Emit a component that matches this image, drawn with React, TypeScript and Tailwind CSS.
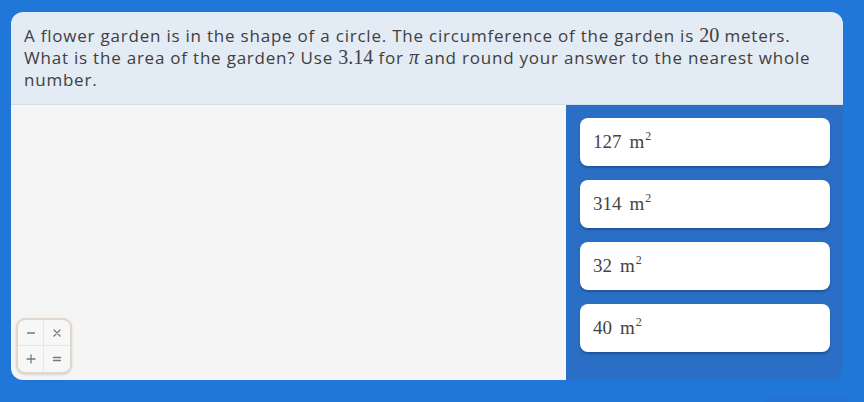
import React from "react";

const M = ({ children, italic }: { children: React.ReactNode; italic?: boolean }) => (
  <span
    className={`text-[1.18em] leading-none tracking-normal ${italic ? "italic" : ""}`}
    style={{ fontFamily: '"Liberation Serif", "DejaVu Serif", serif' }}
  >
    {children}
  </span>
);

const answers = ["127", "314", "32", "40"];

const Sym = ({ d }: { d: string }) => (
  <svg width="10" height="10" viewBox="0 0 10 10" fill="none" stroke="#777" strokeWidth="1.3" strokeLinecap="round">
    <path d={d} />
  </svg>
);

export default function App() {
  return (
    <div className="w-[864px] h-[402px] bg-[#2177d8] overflow-hidden pt-[12px] px-[11px]">
      <div className="w-[832px] h-[368px] rounded-[12px] overflow-hidden flex flex-col">
        <div
          className="bg-[#e3ebf4] h-[93px] pl-[13px] pr-[13px] pt-[13px] text-[17px] leading-[22px] tracking-[0.78px] text-[#404040] border-b border-[#d6dde6]"
          style={{ fontFamily: '"Open Sans", sans-serif' }}
        >
          A flower garden is in the shape of a circle. The circumference of the garden is <M>20</M> meters. What is the
          area of the garden? Use <M>3.14</M> for <M italic>π</M> and round your answer to the nearest whole number.
        </div>
        <div className="flex flex-1">
          <div className="w-[555px] bg-[#f5f5f5] relative">
            <div className="absolute left-[5px] bottom-[6px] w-[56px] h-[56px] rounded-[9px] border-2 border-[#e2d7cc] bg-[#f7f7f8] grid grid-cols-2 grid-rows-2 overflow-hidden shadow-sm">
              <div className="flex items-center justify-center border-r border-b border-[#e3e6ea]">
                <Sym d="M1.5 5 H8.5" />
              </div>
              <div className="flex items-center justify-center border-b border-[#e3e6ea]">
                <Sym d="M2 2 L8 8 M8 2 L2 8" />
              </div>
              <div className="flex items-center justify-center border-r border-[#e3e6ea]">
                <Sym d="M1 5 H9 M5 1 V9" />
              </div>
              <div className="flex items-center justify-center">
                <Sym d="M1.5 3.5 H8.5 M1.5 6.5 H8.5" />
              </div>
            </div>
          </div>
          <div className="flex-1 bg-[#2a6fc5] pt-[13px] pl-[14px] pr-[13px] flex flex-col gap-[14px]">
            {answers.map((a) => (
              <div
                key={a}
                className="h-[48px] bg-white rounded-[8px] shadow-[0_2px_2px_rgba(20,50,100,0.45)] flex items-center pl-[13px] text-[19px] text-[#444]"
                style={{ fontFamily: '"Liberation Serif", "DejaVu Serif", serif' }}
              >
                <span>{a}</span>
                <span className="ml-[8px]">
                  m<sup className="text-[12px] relative -top-[8px] ml-[1px]">2</sup>
                </span>
              </div>
            ))}
          </div>
        </div>
      </div>
      <div className="ml-auto mr-[2px] mt-[16px] w-[88px] h-[20px] rounded-t-[12px] bg-[#2472d2]" />
    </div>
  );
}
